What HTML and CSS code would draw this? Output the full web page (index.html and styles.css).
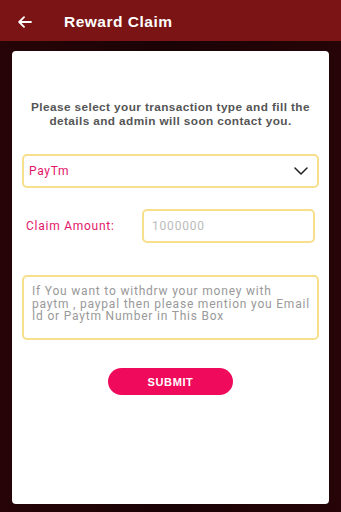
FILE: index.html
```html
<!DOCTYPE html>
<html lang="en">
<head>
    <meta charset="UTF-8">
    <meta name="viewport" content="width=device-width, initial-scale=1.0">
    <title>Reward Claim</title>
    <link rel="stylesheet" href="styles.css">
</head>
<body>

    <!-- Top bar -->
    <header class="top-bar">
        <a href="#" class="back-button">
            <svg width="14" height="12" viewBox="0 0 14 12" fill="none" stroke="white" stroke-width="1.8" stroke-linecap="round" stroke-linejoin="round">
                <path d="M13 6H1.5M6 1.2L1.2 6L6 10.8"/>
            </svg>
        </a>
        <h1>Reward Claim</h1>
    </header>

    <main class="page">
        <div class="card">
            <p class="intro">Please select your transaction type and fill the details and admin will soon contact you.</p>

            <div class="select-box">
                <span>PayTm</span>
                <svg width="14" height="8" viewBox="0 0 14 8" fill="none" stroke="#222" stroke-width="1.5" stroke-linecap="round" stroke-linejoin="round">
                    <path d="M1 1L7 7L13 1"/>
                </svg>
            </div>

            <div class="amount-row">
                <label class="amount-label">Claim Amount:</label>
                <div class="amount-input">1000000</div>
            </div>

            <div class="details-box">If You want to withdrw your money with paytm , paypal then please mention you Email Id or Paytm Number in This Box</div>

            <button class="submit">SUBMIT</button>
        </div>
    </main>

</body>
</html>
```

FILE: styles.css
```css
body {
    margin: 0;
    padding: 0;
    height: 512px;
    font-family: Roboto, "Liberation Sans", sans-serif;
    background: #1e0406;
    display: flex;
    flex-direction: column;
}
.top-bar {
    height: 41px;
    background: #7b1414;
    display: flex;
    align-items: center;
    padding: 3px 0 0 18px;
    box-sizing: border-box;
}
.back-button {
    display: flex;
    width: 14px;
    margin-right: 32px;
}
.top-bar h1 {
    margin: 0;
    color: white;
    font-size: 15.5px;
    letter-spacing: 0.5px;
    font-weight: bold;
    font-family: "Liberation Sans", Arial, sans-serif;
}
.page {
    flex: 1;
    padding: 10px 12px 8px 12px;
    display: flex;
    background: linear-gradient(to right, #260407, #1a0305 50%, #260407);
}
.card {
    flex: 1;
    background: white;
    border-radius: 4px;
    padding: 49px 10px 0 10px;
    display: flex;
    flex-direction: column;
}
.intro {
    margin: 0;
    text-align: center;
    font-family: "Liberation Sans", Arial, sans-serif;
    font-weight: bold;
    font-size: 11.8px;
    letter-spacing: 0.4px;
    line-height: 14px;
    color: #555;
}
.select-box {
    margin-top: 26px;
    height: 34px;
    border: 2px solid #f7df8c;
    border-radius: 5px;
    box-sizing: border-box;
    display: flex;
    align-items: center;
    justify-content: space-between;
    padding: 0 9px 0 5px;
    color: #e3176a;
    font-size: 12px;
    letter-spacing: 0.7px;
}
.amount-row {
    margin-top: 21px;
    display: flex;
    align-items: center;
    padding: 0 4px;
}
.amount-label {
    width: 116px;
    color: #e3176a;
    font-size: 12px;
    letter-spacing: 0.75px;
}
.amount-input {
    flex: 1;
    height: 34px;
    border: 2px solid #f7df8c;
    border-radius: 5px;
    box-sizing: border-box;
    display: flex;
    align-items: center;
    padding-left: 8px;
    color: #bbb;
    font-size: 12px;
    letter-spacing: 0.8px;
}
.details-box {
    margin-top: 32px;
    height: 65px;
    border: 2px solid #f7df8c;
    border-radius: 5px;
    box-sizing: border-box;
    padding: 8px 6px 6px 8px;
    color: #999;
    font-size: 12px;
    letter-spacing: 0.8px;
    line-height: 12.5px;
}
.submit {
    align-self: center;
    margin-top: 28px;
    width: 125px;
    height: 27px;
    border: none;
    border-radius: 14px;
    background: #f00a5b;
    color: white;
    font-family: "Liberation Sans", Arial, sans-serif;
    font-weight: bold;
    font-size: 11px;
    letter-spacing: 0.6px;
}
```
